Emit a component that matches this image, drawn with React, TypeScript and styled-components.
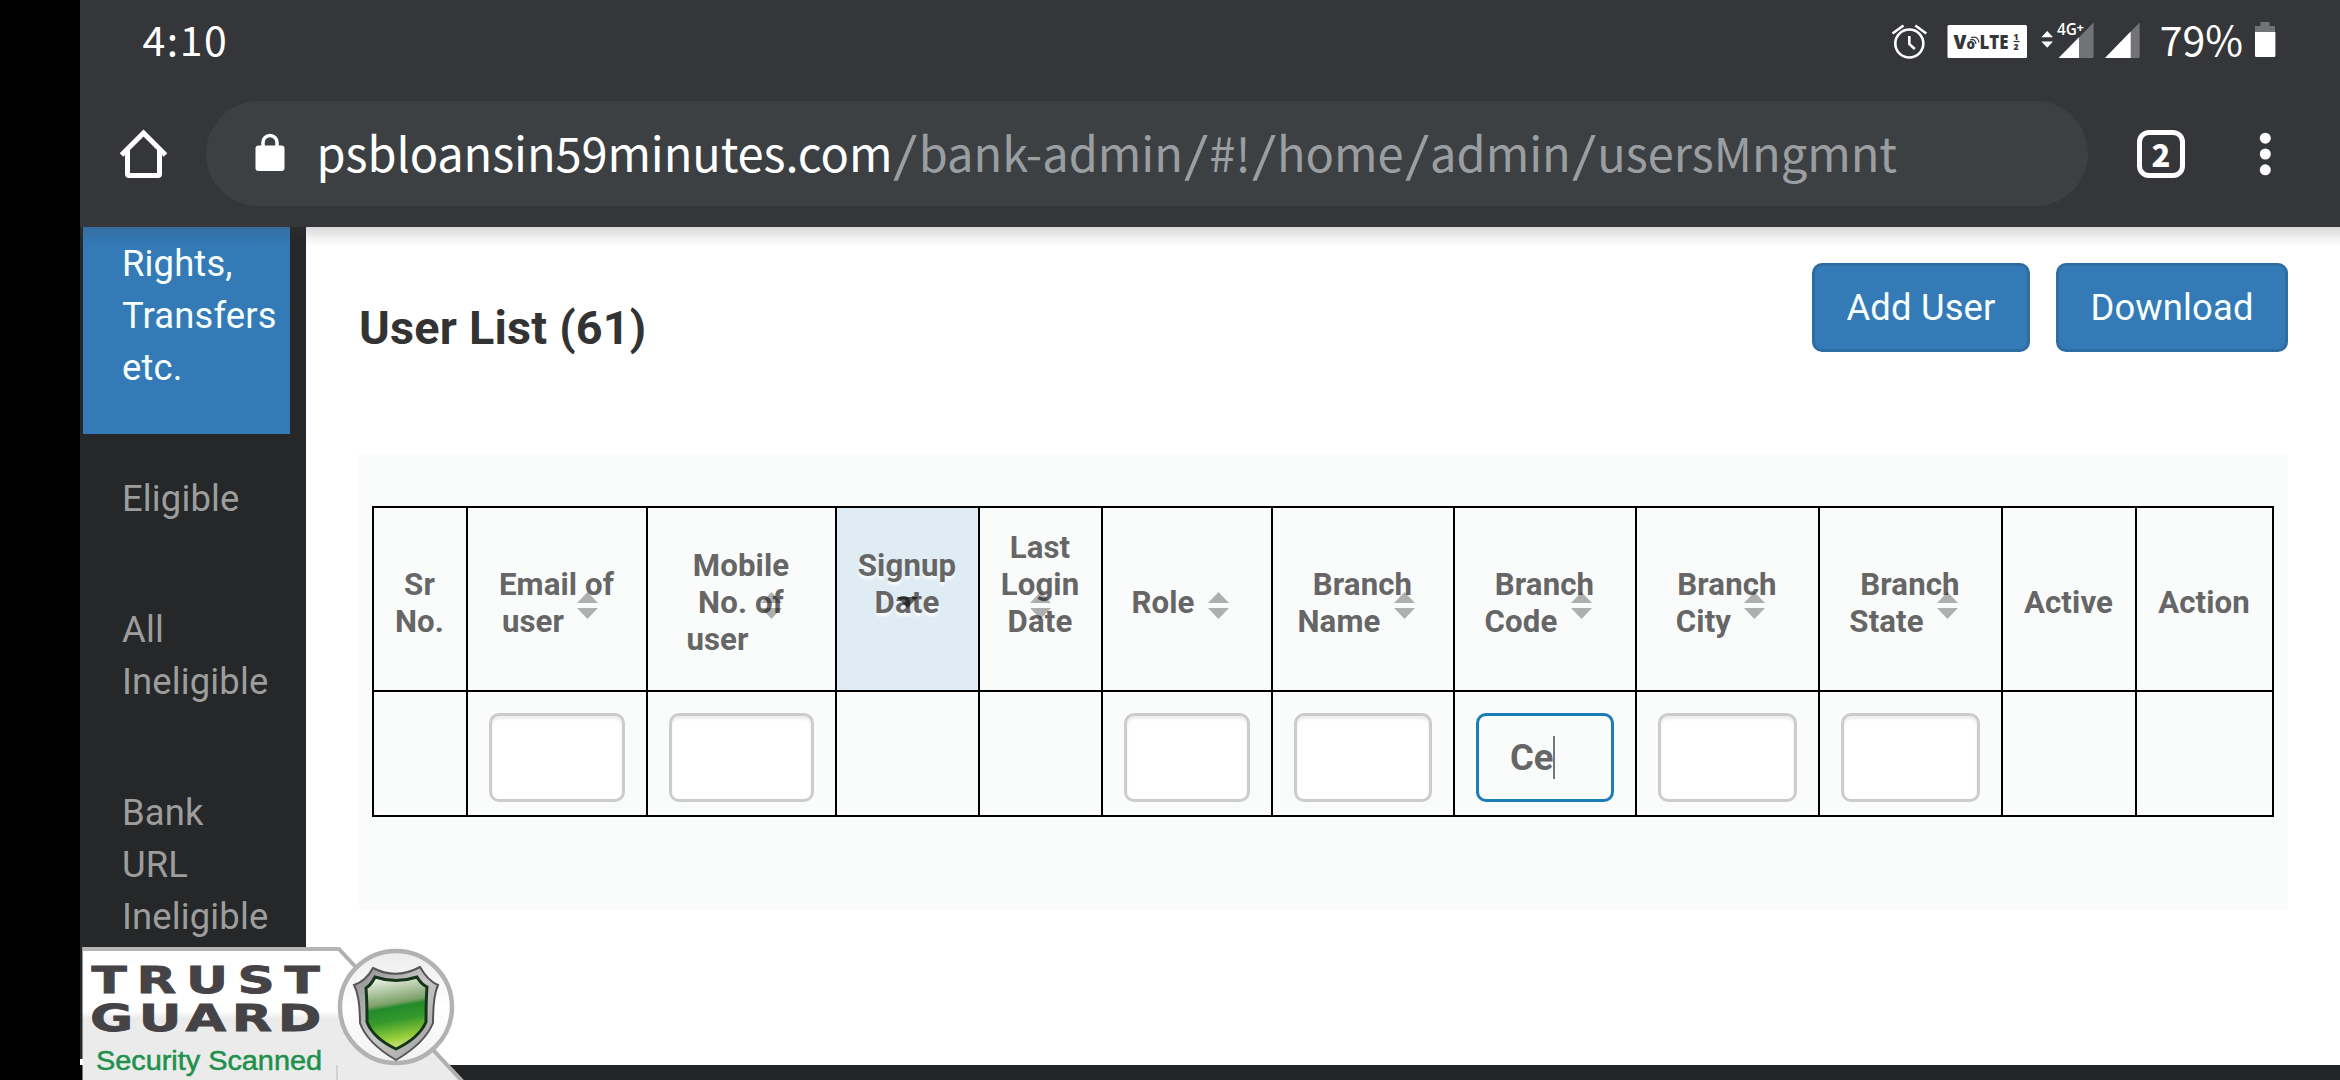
import React from "react";
import styled, { createGlobalStyle, css } from "styled-components";

const GlobalStyle = createGlobalStyle`
  * { box-sizing: border-box; }
  html, body { margin: 0; padding: 0; background: #000; overflow: hidden; }
  body { font-family: Roboto, "Liberation Sans", sans-serif; }
`;

const systemFont = `"Noto Sans CJK SC", "Open Sans", sans-serif`;

const Device = styled.div`
  position: relative;
  display: flex;
  flex-direction: column;
  width: 2340px;
  height: 1080px;
  padding-left: 80px;
  background: #000;
  overflow: hidden;
`;

const BrowserChrome = styled.header`
  flex: none;
  height: 227px;
  background: #35363a;
  color: #fff;
  font-family: ${systemFont};
`;

const StatusBar = styled.div`
  display: flex;
  align-items: center;
  height: 76px;
  padding: 0 64px 0 62.5px;
`;

const StatusText = styled.span<{ $spacing?: number }>`
  font-size: 41px;
  line-height: 60px;
  letter-spacing: ${(p) => p.$spacing ?? 0}px;
  white-space: nowrap;
`;

const StatusIcons = styled.div`
  display: flex;
  align-items: center;
  margin-left: auto;
`;

const StatusSvg = styled.svg`
  flex: none;
  display: block;
`;

const Toolbar = styled.div`
  display: flex;
  align-items: center;
  height: 151px;
  padding: 25px 64px 21px 38px;
`;

const AddressBar = styled.div`
  display: flex;
  align-items: center;
  width: 1882px;
  height: 105px;
  margin: 0 49px 0 37px;
  padding: 0 0 4px 48.5px;
  border-radius: 53px;
  background: #3c4043;
`;

const Address = styled.div`
  margin-left: 32px;
  font-size: 47px;
  line-height: 70px;
  letter-spacing: -0.1px;
  white-space: nowrap;
`;

const AddressPath = styled.span`
  color: #9b9ea1;
  letter-spacing: 0;
`;

const Slash = styled.span`
  display: inline-block;
  margin: 0 4px;
  transform: scaleX(1.35);
`;

const TabCount = styled.div`
  display: flex;
  align-items: center;
  justify-content: center;
  width: 48px;
  height: 48px;
  margin-right: 72px;
  border: 5px solid #fff;
  border-radius: 12px;
  font: 900 31px/34px ${systemFont};
`;

const Page = styled.div`
  position: relative;
  flex: 1;
  display: flex;
  min-height: 0;
  border-bottom: 15px solid #222426;
  background: #fff;

  &::before {
    content: "";
    position: absolute;
    z-index: 2;
    top: 0;
    left: 0;
    right: 0;
    height: 20px;
    background: linear-gradient(rgba(60, 60, 60, 0.2), rgba(60, 60, 60, 0.06) 60%, transparent);
  }
`;

const Sidebar = styled.nav`
  width: 226px;
  height: 832px;
  padding-left: 3px;
  background: #252729;
`;

const NavItem = styled.a<{ $active?: boolean }>`
  display: block;
  width: 207px;
  padding: 39px 13px 40px 39px;
  color: #9d9d9d;
  font-size: 36.4px;
  line-height: 52px;
  letter-spacing: 0.15px;
  ${(p) =>
    p.$active &&
    css`
      height: 207px;
      padding-top: 11px;
      background: #337ab7;
      color: #f7ffff;
    `}
`;

const Content = styled.main`
  flex: 1;
  padding: 36px 52px 0 53px;
`;

const ContentHeader = styled.div`
  display: flex;
  justify-content: space-between;
  height: 190px;
`;

const Title = styled.h1`
  margin: 32px 0 0;
  color: #333;
  font-size: 46.8px;
  font-weight: 700;
  line-height: 66px;
  letter-spacing: 0.2px;
`;

const Actions = styled.div`
  display: flex;
  gap: 26px;
`;

const ActionButton = styled.button<{ $width: number }>`
  width: ${(p) => p.$width}px;
  height: 89px;
  padding: 0;
  border: 3px solid #2e6da4;
  border-radius: 10px;
  background: #337ab7;
  color: #f7ffff;
  font: 400 36.4px/52px Roboto, sans-serif;
  letter-spacing: 0.15px;
`;

const Panel = styled.section`
  height: 456px;
  padding: 53px 0 0 13px;
  background: #fafcfb;
`;

const columns = [94, 180, 189, 143, 123, 170, 182, 182, 183, 183, 134, 137];

const Table = styled.div`
  display: grid;
  width: 1902px;
  grid-template-columns: ${columns.map((c) => `${c}px`).join(" ")};
  grid-template-rows: 184px 125px;
  border: solid #000;
  border-width: 0 2px 2px 0;
`;

const Cell = styled.div`
  position: relative;
  border: solid #000;
  border-width: 2px 0 0 2px;
`;

const HeadCell = styled(Cell)<{ $sorted?: boolean }>`
  display: flex;
  flex-direction: column;
  justify-content: center;
  padding-top: 7px;
  color: #666;
  font-size: 31.2px;
  font-weight: 700;
  line-height: 37px;
  letter-spacing: 0.1px;
  text-align: center;
  ${(p) =>
    p.$sorted &&
    css`
      background: #dfecf4;
      text-shadow: 0 3px 3px rgba(255, 255, 255, 0.9);
    `}
`;

const HeadLine = styled.span<{ $trailing?: boolean }>`
  display: block;
  height: 37px;
  padding-right: ${(p) => (p.$trailing ? 48 : 1)}px;
  white-space: nowrap;
`;

const SortMark = styled.svg<{ $shift: number }>`
  position: absolute;
  top: 84px;
  left: calc(50% + ${(p) => p.$shift - 10.5}px);
  width: 21px;
  height: 27px;
`;

const FilterCell = styled(Cell)`
  padding: 21px 21px 12px;
`;

const FilterInput = styled.div<{ $focused?: boolean }>`
  display: flex;
  align-items: center;
  height: 89px;
  padding-left: 31px;
  border: 3px solid ${(p) => (p.$focused ? "#1c7cb4" : "#ccc")};
  border-radius: 10px;
  background: ${(p) => (p.$focused ? "#fafcfb" : "#fff")};
  box-shadow: ${(p) => (p.$focused ? "none" : "inset 0 3px 3px rgba(0, 0, 0, 0.075)")};
  color: #666;
  font-size: 36.4px;
  font-weight: 700;
`;

const Caret = styled.span`
  width: 2px;
  height: 43px;
  background: #777;
`;

const TrustBadge = styled.svg`
  position: absolute;
  z-index: 3;
  left: 80px;
  bottom: 0;
`;

type HeadColumn = {
  lines: string[];
  trailing?: boolean;
  sort?: number;
  sorted?: boolean;
  filter?: boolean;
  value?: string;
};

const headColumns: HeadColumn[] = [
  { lines: ["Sr", "No."] },
  { lines: ["Email of", "user"], trailing: true, sort: 30, filter: true },
  { lines: ["Mobile", "No. of", "user"], trailing: true, sort: 30, filter: true },
  { lines: ["Signup", "Date", ""], sort: 0, sorted: true },
  { lines: ["Last", "Login", "Date", ""], sort: 0 },
  { lines: ["Role"], trailing: true, sort: 31, filter: true },
  { lines: ["Branch", "Name"], trailing: true, sort: 41, filter: true },
  { lines: ["Branch", "Code"], trailing: true, sort: 36.5, filter: true, value: "Ce" },
  { lines: ["Branch", "City"], trailing: true, sort: 26.5, filter: true },
  { lines: ["Branch", "State"], trailing: true, sort: 36.5, filter: true },
  { lines: ["Active"] },
  { lines: ["Action"] },
];

const navItems = ["Rights, Transfers etc.", "Eligible", "All Ineligible", "Bank URL Ineligible"];

const addressPath = "/bank-admin/#!/home/admin/usersMngmnt";

function StatusGlyphs() {
  return (
    <StatusSvg width="272" height="44" viewBox="1888 16 272 44">
      <g fill="none" stroke="#fff" strokeWidth="2.6">
        <circle cx="1909.3" cy="43.5" r="14" />
        <path d="M1909.3 36v8l5.5 5M1892.5 33.5l11-8M1926.3 33.5l-11-8" />
      </g>
      <rect x="1947.5" y="25" width="79.5" height="33" rx="1.5" fill="#fff" />
      <g fill="#35363a" fontFamily="Open Sans, sans-serif" fontWeight="800">
        <text x="1953.5" y="49" fontSize="19" textLength="13" lengthAdjust="spacingAndGlyphs">V</text>
        <text x="1966.5" y="49" fontSize="14" textLength="8.5" lengthAdjust="spacingAndGlyphs">o</text>
        <text x="1979.5" y="49" fontSize="19" textLength="29" lengthAdjust="spacingAndGlyphs">LTE</text>
        <text x="2013.6" y="40" fontSize="8.500">1</text>
        <text x="2013.6" y="49.500" fontSize="8.500">2</text>
      </g>
      <path d="M2013.6 41.5h6" stroke="#35363a" strokeWidth="1.2" />
      <path d="M1970 40q5-2 6 4M1971 37.500q7-2 8 5" fill="none" stroke="#35363a" strokeWidth="1.3" />
      <path d="M2041.400 37.300l5.800-6.300 5.800 6.300zM2041.400 41.500l5.800 6.300 5.800-6.300z" fill="#fff" />
      <path d="M2058.600 58L2093.600 22.500V56.500a1.500 1.500 0 0 1-1.500 1.500z" fill="#727377" />
      <path d="M2058.600 58L2079 37.300V58z" fill="#fff" />
      <text
        x="2057"
        y="35"
        fontFamily="Open Sans, sans-serif"
        fontWeight="600"
        fontSize="17"
        textLength="20"
        lengthAdjust="spacingAndGlyphs"
        fill="#fff"
        stroke="#35363a"
        strokeWidth="3"
        paintOrder="stroke"
      >
        4G
      </text>
      <text
        x="2076.500"
        y="32"
        fontFamily="Open Sans, sans-serif"
        fontWeight="700"
        fontSize="13"
        fill="#fff"
        stroke="#35363a"
        strokeWidth="2.500"
        paintOrder="stroke"
      >
        +
      </text>
      <path d="M2105 58L2139.600 22.500V56.500a1.500 1.500 0 0 1-1.500 1.500z" fill="#727377" />
      <path d="M2105 58L2130.700 31.600V58z" fill="#fff" />
    </StatusSvg>
  );
}

function BatteryGlyph() {
  return (
    <StatusSvg width="21" height="44" viewBox="2255 16 21 44">
      <path d="M2260.400 22h9.200v4h5.400v7h-20v-7h5.400z" fill="#727377" />
      <path d="M2255 32h20.400v23.500a1.500 1.500 0 0 1-1.500 1.500h-17.400a1.500 1.500 0 0 1-1.500-1.500z" fill="#fff" />
    </StatusSvg>
  );
}

function SortIcon({ shift, sorted }: { shift: number; sorted?: boolean }) {
  return (
    <SortMark $shift={shift} viewBox="0 0 21 27">
      {sorted ? (
        <path d="M0 5h21L10.500 16z" opacity="0.6" />
      ) : (
        <path d="M0 11L10.500 0 21 11zM0 16h21L10.500 27z" opacity="0.3" />
      )}
    </SortMark>
  );
}

function TrustGuard() {
  return (
    <TrustBadge width="390" height="134" viewBox="80 946 390 134">
      <defs>
        <linearGradient id="plate" x1="0" y1="0" x2="0" y2="1">
          <stop offset="0.48" stopColor="#fff" />
          <stop offset="0.54" stopColor="#ebebeb" />
        </linearGradient>
        <linearGradient id="green" x1="0.4" y1="0" x2="0.55" y2="1">
          <stop offset="0" stopColor="#e8efe2" />
          <stop offset="0.36" stopColor="#7ba068" />
          <stop offset="0.42" stopColor="#218a2c" />
          <stop offset="0.6" stopColor="#36992b" />
          <stop offset="0.85" stopColor="#9bcf3d" />
          <stop offset="1" stopColor="#d5e890" />
        </linearGradient>
        <linearGradient id="lens" x1="0" y1="0" x2="0" y2="1">
          <stop offset="0" stopColor="#ececec" />
          <stop offset="0.5" stopColor="#fff" />
          <stop offset="1" stopColor="#f1f1f1" />
        </linearGradient>
        <linearGradient id="silver" x1="0" y1="0" x2="1" y2="1">
          <stop offset="0" stopColor="#8d8d8d" />
          <stop offset="0.5" stopColor="#c8c8c8" />
          <stop offset="1" stopColor="#999" />
        </linearGradient>
      </defs>
      <path d="M80 1059h4v6h-4z" fill="#fff" />
      <path d="M80 1065h4v15h-4z" fill="#000" />
      <path d="M82.500 947H338L463 1080H82.500z" fill="url(#plate)" />
      <path d="M82.500 949H338" stroke="#b4b4b4" strokeWidth="4" />
      <path d="M338 948L463 1082" stroke="#b0b0b0" strokeWidth="4" />
      <path d="M337 1065v15" stroke="#b8b8b8" />
      <circle cx="396" cy="1007" r="56" fill="url(#lens)" stroke="#b2b2b2" strokeWidth="4.500" />
      <path
        d="M373 968Q396 980 420 967Q428 981 438 985Q433 996 433 1023Q425 1043 396 1060Q367 1043 360 1023Q360 996 354 985Q366 981 373 968Z"
        fill="url(#silver)"
        stroke="#555"
        strokeWidth="2"
      />
      <path
        d="M375 977Q396 984 417 977Q421 984 427 987Q426 1000 426 1022Q419 1038 396 1049Q373 1038 367 1022Q367 1000 366 988Q371 985 375 977Z"
        fill="url(#green)"
        stroke="#15351a"
        strokeWidth="3"
      />
      <g
        fill="#454345"
        stroke="#454345"
        strokeWidth="0.800"
        fontFamily="DejaVu Sans, sans-serif"
        fontWeight="700"
        fontSize="37.500"
      >
        <text x="91.500" y="992.500" textLength="238" lengthAdjust="spacingAndGlyphs" letterSpacing="7">
          TRUST
        </text>
        <text x="90" y="1031" textLength="237" lengthAdjust="spacingAndGlyphs" letterSpacing="4">
          GUARD
        </text>
      </g>
      <text
        x="96"
        y="1070"
        textLength="226"
        lengthAdjust="spacingAndGlyphs"
        fontFamily="Liberation Sans, sans-serif"
        fontSize="27"
        fill="#20904c"
        stroke="#20904c"
        strokeWidth="0.500"
      >
        Security Scanned
      </text>
    </TrustBadge>
  );
}

export default function App() {
  return (
    <Device>
      <GlobalStyle />
      <BrowserChrome>
        <StatusBar>
          <StatusText $spacing={1.5}>4:10</StatusText>
          <StatusIcons>
            <StatusGlyphs />
            <StatusText>79%</StatusText>
            <StatusSvg width="12" height="1" />
            <BatteryGlyph />
          </StatusIcons>
        </StatusBar>
        <Toolbar>
          <StatusSvg width="51" height="52" viewBox="118 128 51 52">
            <path
              d="M121.500 155L143.500 133 165.500 155M127.500 150V174a1.500 1.500 0 0 0 1.500 1.500H158a1.500 1.500 0 0 0 1.500-1.500V150"
              fill="none"
              stroke="#fff"
              strokeWidth="5"
            />
          </StatusSvg>
          <AddressBar>
            <StatusSvg width="30" height="38" viewBox="254.500 133.500 30 38">
              <rect x="255" y="146" width="29" height="25.500" rx="3" fill="#fff" />
              <path d="M262.500 148v-5a7 7 0 0 1 14 0v5" fill="none" stroke="#fff" strokeWidth="3.500" />
            </StatusSvg>
            <Address>
              psbloansin59minutes.com
              <AddressPath>
                {addressPath.split(/(\/)/).map((part, i) => (part === "/" ? <Slash key={i}>/</Slash> : part))}
              </AddressPath>
            </Address>
          </AddressBar>
          <TabCount>2</TabCount>
          <StatusSvg width="16" height="48" viewBox="2258 129.500 16 48">
            <g fill="#fff">
              <circle cx="2266.300" cy="137.700" r="5.500" />
              <circle cx="2266.300" cy="153.500" r="5.500" />
              <circle cx="2266.300" cy="169.300" r="5.500" />
            </g>
          </StatusSvg>
        </Toolbar>
      </BrowserChrome>
      <Page>
        <Sidebar>
          {navItems.map((label, i) => (
            <NavItem key={label} $active={i === 0}>
              {label}
            </NavItem>
          ))}
        </Sidebar>
        <Content>
          <ContentHeader>
            <Title>User List (61)</Title>
            <Actions>
              <ActionButton $width={218}>Add User</ActionButton>
              <ActionButton $width={232}>Download</ActionButton>
            </Actions>
          </ContentHeader>
          <Panel>
            <Table>
              {headColumns.map((col, i) => (
                <HeadCell key={i} $sorted={col.sorted}>
                  {col.lines.map((line, n) => (
                    <HeadLine key={n} $trailing={col.trailing && n === col.lines.length - 1}>
                      {line}
                    </HeadLine>
                  ))}
                  {col.sort !== undefined && <SortIcon shift={col.sort} sorted={col.sorted} />}
                </HeadCell>
              ))}
              {headColumns.map((col, i) => (
                <FilterCell key={i}>
                  {col.filter && (
                    <FilterInput $focused={!!col.value}>
                      {col.value}
                      {col.value && <Caret />}
                    </FilterInput>
                  )}
                </FilterCell>
              ))}
            </Table>
          </Panel>
        </Content>
      </Page>
      <TrustGuard />
    </Device>
  );
}
